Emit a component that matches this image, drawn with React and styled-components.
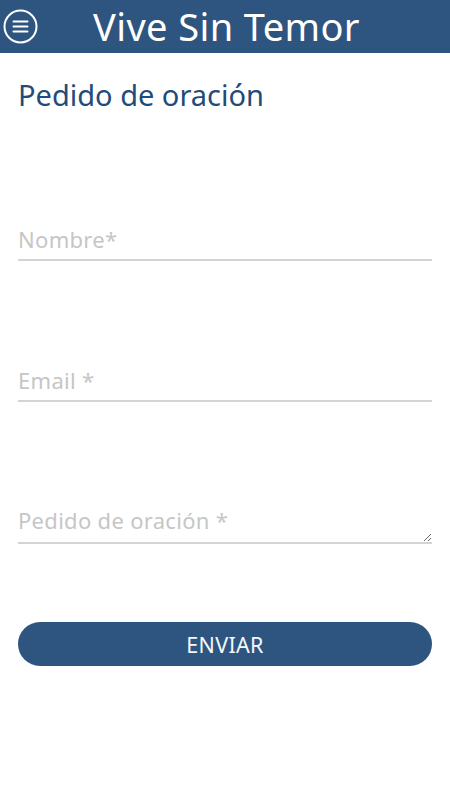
import React, { useState } from 'react';
import styled, { createGlobalStyle } from 'styled-components';

const GlobalStyle = createGlobalStyle`
  html, body {
    margin: 0;
    padding: 0;
    background: #ffffff;
    font-family: 'Noto Sans', 'Open Sans', sans-serif;
  }
  * {
    box-sizing: border-box;
  }
`;

const Header = styled.header`
  display: flex;
  align-items: center;
  height: 53px;
  background: #2e5580;
  padding: 0 3px;
`;

const MenuButton = styled.button`
  display: flex;
  align-items: center;
  justify-content: center;
  width: 35px;
  height: 35px;
  padding: 0;
  border: none;
  background: transparent;
  cursor: pointer;
`;

const Title = styled.h1`
  flex: 1;
  margin: 0 0 0 55px;
  color: #ffffff;
  font-size: 38px;
  font-weight: 400;
  letter-spacing: 0.4px;
  line-height: 53px;
`;

const Content = styled.main`
  padding: 0 18px;
`;

const Heading = styled.h2`
  margin: 20px 0 0;
  color: #1f4c78;
  font-size: 29px;
  font-weight: 400;
  line-height: 44px;
`;

const Form = styled.form`
  display: flex;
  flex-direction: column;
`;

const Field = styled.div`
  margin-top: ${(p) => p.$top}px;
`;

const fieldStyles = `
  display: block;
  width: 100%;
  border: none;
  border-bottom: 2px solid #d4d4d4;
  background: transparent;
  font-family: 'Noto Sans', 'Open Sans', sans-serif;
  font-size: 22px;
  letter-spacing: 0.3px;
  color: #333333;
  outline: none;
  padding: 0;
  &::placeholder {
    color: #c6c6c6;
  }
`;

const Input = styled.input`
  ${fieldStyles}
  height: 41px;
  padding-bottom: 2px;
`;

const TextArea = styled.textarea`
  ${fieldStyles}
  height: 42px;
  padding-top: 4px;
  line-height: 28px;
  resize: vertical;
`;

const SubmitButton = styled.button`
  width: 100%;
  height: 44px;
  margin-top: 78px;
  border: none;
  border-radius: 22px;
  background: #2e5580;
  color: #f4f8fc;
  font-family: 'Noto Sans', 'Open Sans', sans-serif;
  font-size: 21.5px;
  letter-spacing: 0.3px;
  cursor: pointer;
`;

const MenuIcon = () => (
  <svg width="35" height="35" viewBox="0 0 35 35" fill="none">
    <circle cx="17.5" cy="17.5" r="16" stroke="#ffffff" strokeWidth="2" />
    <path
      d="M10.5 12.5h14M10.5 17.5h14M10.5 22.5h14"
      stroke="#ffffff"
      strokeWidth="2"
      strokeLinecap="round"
    />
  </svg>
);

export default function App() {
  const [form, setForm] = useState({ nombre: '', email: '', pedido: '' });

  const handleChange = (e) => {
    setForm({ ...form, [e.target.name]: e.target.value });
  };

  return (
    <>
      <GlobalStyle />
      <Header>
        <MenuButton aria-label='Menú'>
          <MenuIcon />
        </MenuButton>
        <Title>Vive Sin Temor</Title>
      </Header>
      <Content>
        <Heading>Pedido de oración</Heading>
        <Form onSubmit={(e) => e.preventDefault()}>
          <Field $top={103}>
            <Input
              name='nombre'
              placeholder='Nombre*'
              value={form.nombre}
              onChange={handleChange}
            />
          </Field>
          <Field $top={100}>
            <Input
              name='email'
              type='email'
              placeholder='Email *'
              value={form.email}
              onChange={handleChange}
            />
          </Field>
          <Field $top={100}>
            <TextArea
              name='pedido'
              placeholder='Pedido de oración *'
              value={form.pedido}
              onChange={handleChange}
            />
          </Field>
          <SubmitButton type='submit'>ENVIAR</SubmitButton>
        </Form>
      </Content>
    </>
  );
}
